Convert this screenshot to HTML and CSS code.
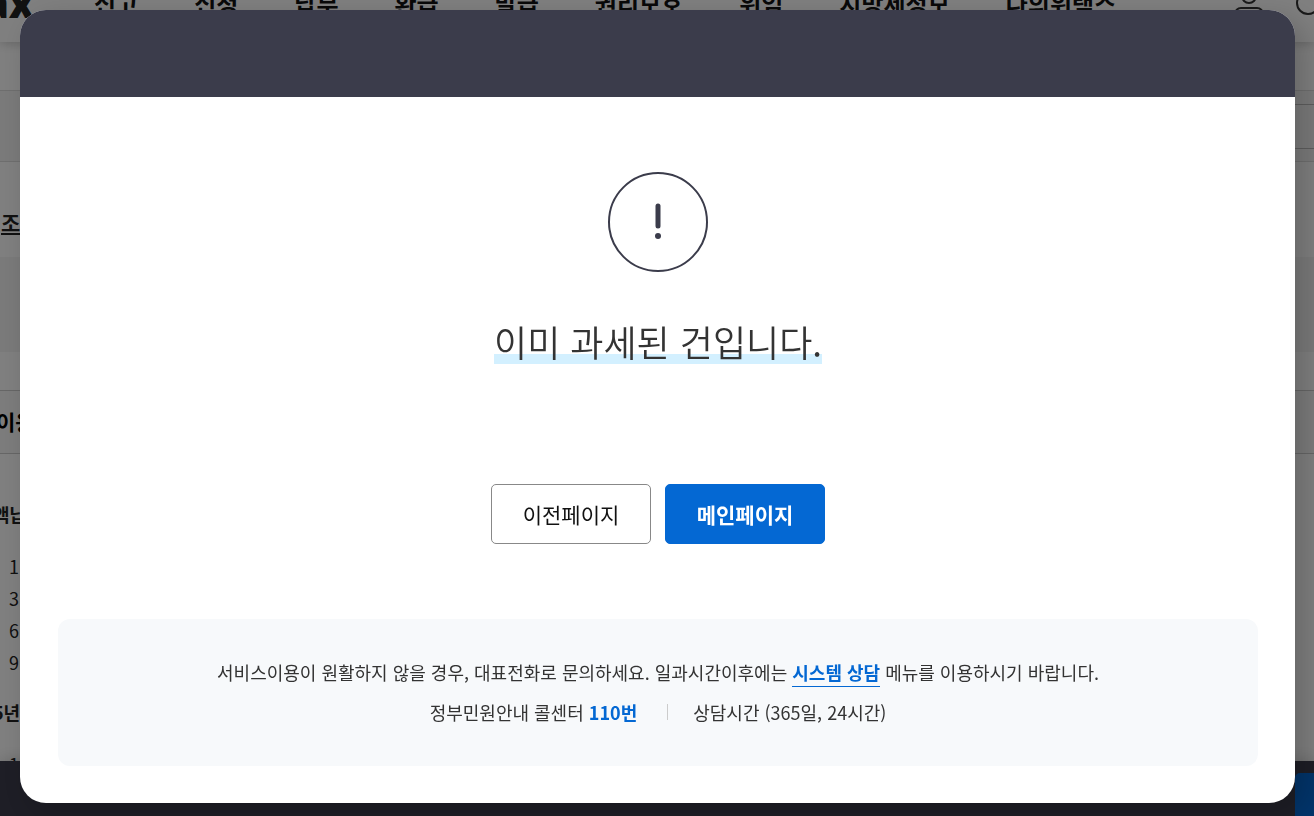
FILE: index.html
```html
<!DOCTYPE html>
<html lang="ko">
<head>
  <meta charset="UTF-8" />
  <meta name="viewport" content="width=device-width, initial-scale=1.0"/>
  <title>Wetax</title>
  <link rel="stylesheet" href="styles.css">
</head>
<body>
  <div class="page">
    <header class="header">
      <div class="logo">Wetax</div>
      <nav class="nav">
        <a href="#">신고</a>
        <a href="#">신청</a>
        <a href="#">납부</a>
        <a href="#">환급</a>
        <a href="#">발급</a>
        <a href="#">권리보호</a>
        <a href="#">위임</a>
        <a href="#">지방세정보</a>
        <a href="#">나의위택스</a>
      </nav>
      <div class="tools">
        <svg width="32" height="36" viewBox="0 0 32 36" fill="none" stroke="#333" stroke-width="2">
          <circle cx="15" cy="11" r="7"/>
          <path d="M1 31v-2a6 6 0 0 1 6-6h16a6 6 0 0 1 6 6v2"/>
        </svg>
        <svg width="32" height="36" viewBox="0 0 32 36" fill="none" stroke="#333" stroke-width="2">
          <circle cx="14" cy="18" r="11"/>
          <path d="M22 26l8 8"/>
        </svg>
      </div>
    </header>

    <div class="filter"><div class="filter-box"></div></div>
    <h2 class="title"><u>조</u></h2>
    <div class="band"></div>
    <div class="guide">이용</div>
    <div class="content">
      <h3>액납</h3>
      <ul>
        <li>1</li>
        <li>3</li>
        <li>6</li>
        <li>9</li>
      </ul>
      <h3>5년</h3>
      <ul>
        <li>1</li>
      </ul>
    </div>
  </div>

  <footer class="footer"><div class="footer-btn"></div></footer>

  <!-- Error popup -->
  <div class="modal">
    <div class="modal-content" role="dialog" aria-labelledby="message">
      <div class="modal-header"></div>
      <div class="modal-body">
        <svg class="icon" width="100" height="100" viewBox="0 0 100 100" fill="none" stroke="#3b3c4b">
          <circle cx="50" cy="50" r="49" stroke-width="2"/>
          <path d="M50 34v20" stroke-width="5" stroke-linecap="round"/>
          <circle cx="50" cy="64" r="3" fill="#3b3c4b" stroke="none"/>
        </svg>
        <h1 class="message" id="message">이미 과세된 건입니다.</h1>
        <div class="buttons">
          <button type="button" class="btn">이전페이지</button>
          <button type="button" class="btn primary">메인페이지</button>
        </div>
        <div class="info">
          <p>서비스이용이 원활하지 않을 경우, 대표전화로 문의하세요. 일과시간이후에는 <a href="#">시스템 상담</a> 메뉴를 이용하시기 바랍니다.</p>
          <p class="call"><span>정부민원안내 콜센터 <strong>110번</strong></span><span class="time">상담시간 (365일, 24시간)</span></p>
        </div>
      </div>
    </div>
  </div>
</body>
</html>
```

FILE: styles.css
```css
* {
  margin: 0;
  padding: 0;
  box-sizing: border-box;
}

body {
  height: 100vh;
  overflow: hidden;
  background: #fff;
  color: #222;
  font-family: 'Noto Sans CJK KR', 'Noto Sans', sans-serif;
  font-size: 18px;
}

ul {
  list-style: none;
}

/* Page behind the popup, scrolled a little */
.page {
  margin-top: -36px;
}

.header {
  display: flex;
  align-items: center;
  height: 78px;
  box-shadow: 0 2px 10px rgba(0, 0, 0, 0.2);
}

.logo {
  display: flex;
  justify-content: flex-end;
  width: 34px;
  margin-right: 60px;
  overflow: hidden;
  font-family: 'Open Sans', sans-serif;
  font-size: 40px;
  line-height: 48px;
  font-weight: 800;
}

.nav {
  display: flex;
  flex: 1;
  gap: 56px;
}

.nav a {
  color: #111;
  font-size: 24px;
  line-height: 36px;
  font-weight: 700;
  text-decoration: none;
  white-space: nowrap;
}

.tools {
  display: flex;
  gap: 28px;
  margin-right: -12px;
}

.filter {
  height: 72px;
  margin-top: 48px;
  padding: 13px 0;
  background: #f5f5f5;
  border-top: 1px solid #ddd;
  border-bottom: 1px solid #ddd;
}

.filter-box {
  height: 45px;
  width: 100px;
  margin-left: auto;
  border-top: 1px solid #bbb;
  border-bottom: 1px solid #bbb;
}

.title {
  height: 95px;
  padding-left: 1px;
  font-size: 21px;
  line-height: 120px;
}

.band {
  height: 95px;
  background: #f5f5f5;
}

.guide {
  height: 64px;
  margin-top: 38px;
  margin-left: -4px;
  background: #f8f8f8;
  border-top: 1px solid #ccc;
  border-bottom: 1px solid #ccc;
  color: #000;
  font-size: 21px;
  line-height: 60px;
  font-weight: 700;
}

.content {
  padding-top: 44px;
}

.content h3 {
  margin-left: -7px;
  font-size: 18px;
  line-height: 32px;
}

.content ul {
  padding: 20px 0 18px 9px;
}

.content li {
  line-height: 32px;
}

.footer {
  position: fixed;
  left: 0;
  right: 0;
  bottom: 0;
  height: 55px;
  padding-top: 12px;
  background: #3c3c4c;
  box-shadow: 0 0 16px rgba(0, 0, 0, 0.2);
}

.footer-btn {
  width: 19px;
  height: 43px;
  margin-left: auto;
  background: #0468d3;
  border-radius: 5px 0 0 0;
}

/* Popup */
.modal {
  position: fixed;
  top: 0;
  left: 0;
  width: 100%;
  height: 100%;
  padding: 10px 19px 13px 20px;
  background: rgba(0, 0, 0, 0.5);
}

.modal-content {
  display: flex;
  flex-direction: column;
  height: 100%;
  overflow: hidden;
  background: #fff;
  border-radius: 26px;
  box-shadow: 10px 10px 30px rgba(0, 0, 0, 0.2);
}

.modal-header {
  height: 87px;
  flex-shrink: 0;
  background: #3b3c4b;
}

.modal-body {
  display: flex;
  flex-direction: column;
  align-items: center;
  padding: 75px 37px 0 38px;
}

.message {
  margin-top: 42px;
  background: linear-gradient(#d3f0ff, #d3f0ff) no-repeat 0 40px / 100% 10px;
  color: #333;
  font-size: 36px;
  line-height: 54px;
  font-weight: 350;
}

.buttons {
  display: flex;
  gap: 14px;
  margin-top: 116px;
}

.btn {
  width: 160px;
  height: 60px;
  background: #fff;
  border: 1px solid #888;
  border-radius: 5px;
  color: #111;
  font-family: inherit;
  font-size: 21px;
  font-weight: 400;
  cursor: pointer;
}

.btn.primary {
  background: #0468d3;
  border-color: #0468d3;
  color: #fff;
  font-weight: 700;
}

.info {
  width: 100%;
  margin-top: 75px;
  padding: 33px 20px 34px;
  background: #f7f9fb;
  border-radius: 12px;
  color: #333;
  line-height: 40px;
  text-align: center;
}

.info a {
  padding-bottom: 1px;
  border-bottom: 1px solid #0468d3;
  color: #0468d3;
  font-weight: 700;
  text-decoration: none;
}

.info strong {
  color: #0468d3;
}

.call {
  display: flex;
  justify-content: center;
  align-items: center;
}

.time {
  display: flex;
  align-items: center;
}

.time::before {
  content: "";
  width: 1px;
  height: 16px;
  margin: 0 25px 0 30px;
  background: #ccc;
}
```
